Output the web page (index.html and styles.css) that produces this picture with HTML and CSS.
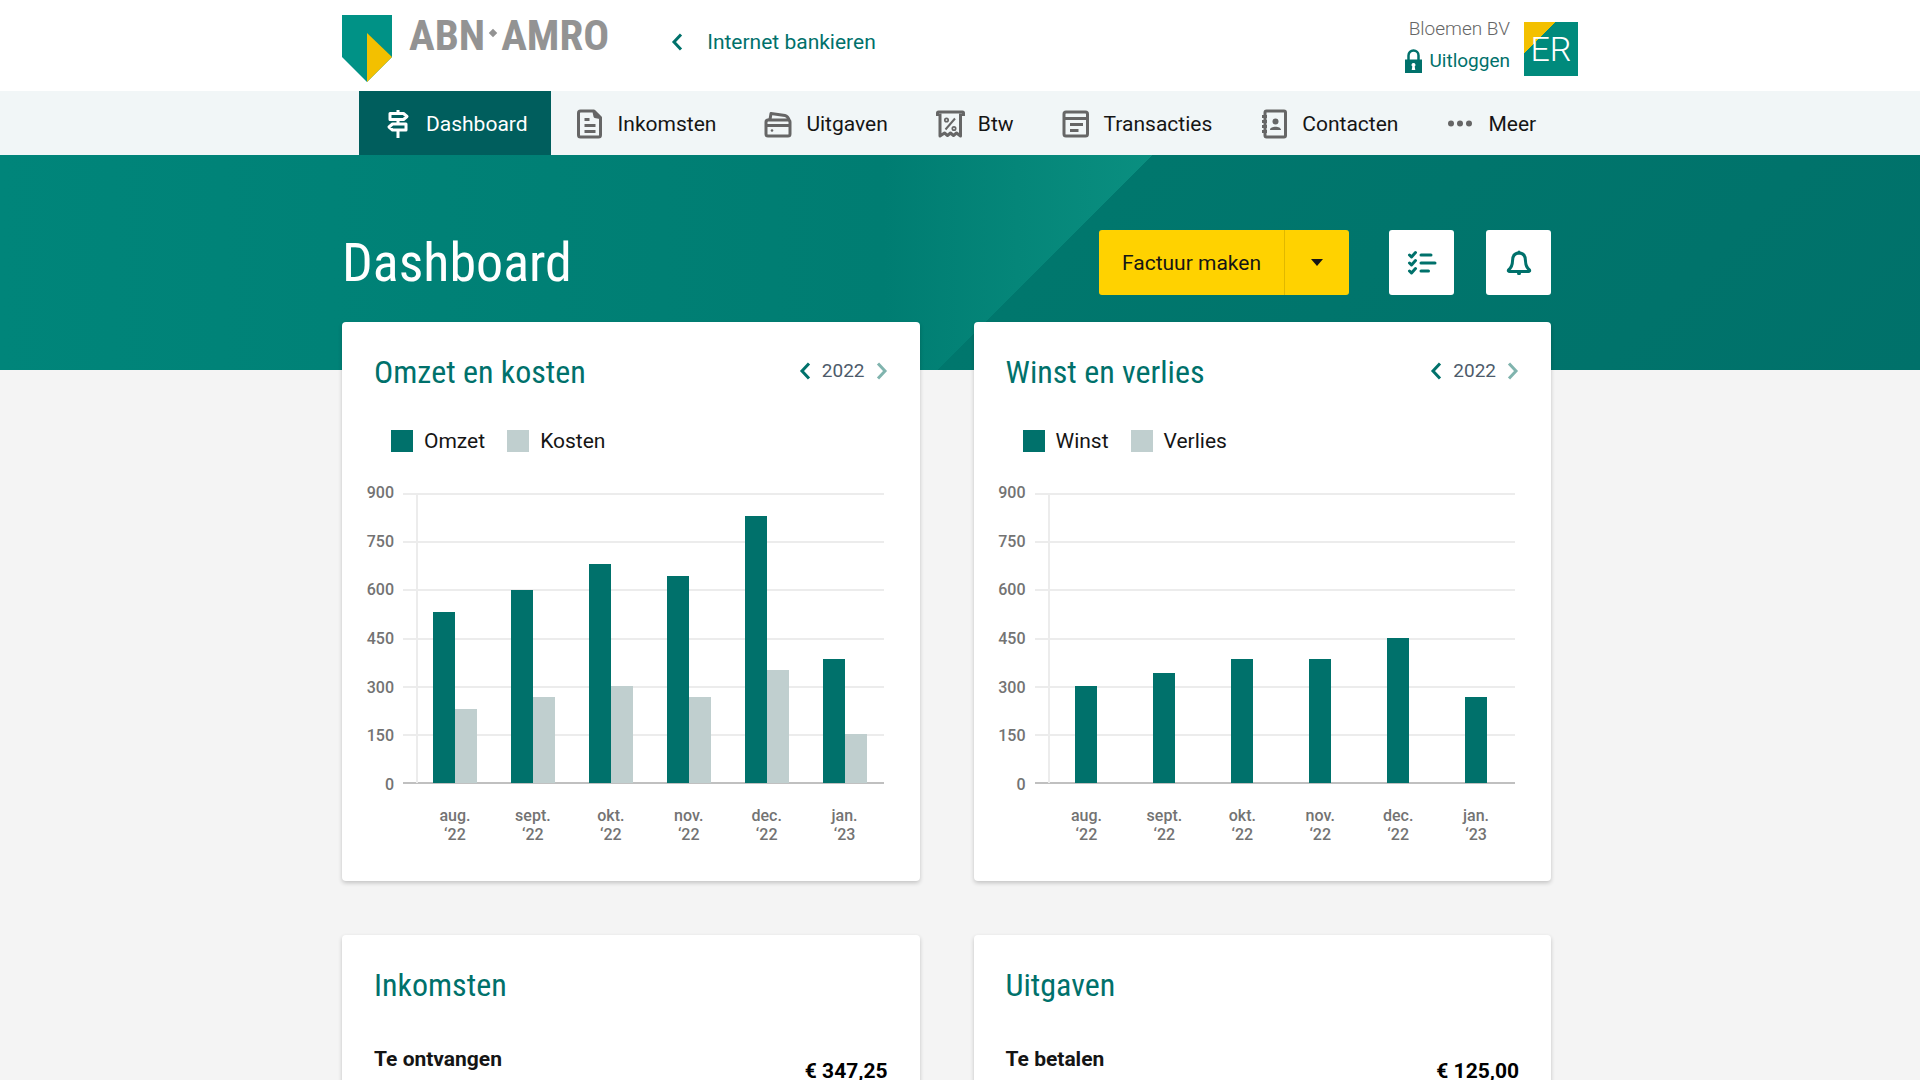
FILE: index.html
```html
<!DOCTYPE html>
<html lang="nl">
<head>
<meta charset="utf-8">
<meta name="viewport" content="width=device-width, initial-scale=1">
<title>Dashboard</title>
<link rel="stylesheet" href="styles.css">
</head>
<body>
<header class="topbar">
  <div class="topbar-inner container">
  <a class="brand" href="#" aria-label="ABN AMRO">
    <svg class="brand-shield" viewBox="0 0 50 67" aria-hidden="true"><path fill="#009286" d="M0 0h50v42L25 67 0 42z"/><path fill="#f3c000" d="M25 18l25 24-25 25z"/></svg>
    <span class="brand-name"><span>ABN</span><i class="brand-dot"></i><span>AMRO</span></span>
  </a>
  <a class="back-link" href="#">
    <svg class="chevron" viewBox="0 0 12 18" aria-hidden="true"><path d="M10 1.500L3 9l7 7.500"/></svg>
    Internet bankieren
  </a>
  <div class="account">
    <div class="account-text">
      <span class="account-name">Bloemen BV</span>
      <a class="logout" href="#">
        <svg class="lock" viewBox="0 0 17 24" aria-hidden="true"><path fill="none" stroke="#00716b" stroke-width="2.500" d="M3.500 11V6.500a5 5 0 0 1 10 0V11"/><path fill="#00716b" d="M0 10.500h17V24H0z"/><path fill="#fff" d="M8.500 14a2 2 0 0 1 1.200 3.600l.6 3.400H6.700l.6-3.400A2 2 0 0 1 8.500 14z"/></svg>
        Uitloggen
      </a>
    </div>
    <div class="avatar">ER</div>
  </div>
  </div>
</header>

<nav class="nav">
  <div class="nav-inner container">
    <a class="nav-item nav-item-active" href="#">
      <svg class="nav-icon" viewBox="0 0 32 32" aria-hidden="true"><path d="M16 2v3M16 12v4M16 22v8M8 5.500h13.500l3.500 3-3.500 3H8zM24 16H10.500L7 19l3.500 3H24z"/></svg>
      Dashboard</a>
    <a class="nav-item" href="#">
      <svg class="nav-icon" viewBox="0 0 32 32" aria-hidden="true"><path d="M6.500 3H20l6.500 6.500V27a2 2 0 0 1-2 2h-18a2 2 0 0 1-2-2V5a2 2 0 0 1 2-2zM20 4l1 4.500 5 1M10.500 11.500H15.500M10.500 17.500h11M10.500 23.500h11"/></svg>
      Inkomsten</a>
    <a class="nav-item" href="#">
      <svg class="nav-icon" viewBox="0 0 32 32" aria-hidden="true"><path d="M6 12h20a2 2 0 0 1 2 2v12a2 2 0 0 1-2 2H6a2 2 0 0 1-2-2V14a2 2 0 0 1 2-2zM4 17.500h24M4 14q0-2 4-2.500L9 5.500l14 2q3 .5 4.500 5.500"/><circle cx="10" cy="22.500" r="1.300" fill="currentColor" stroke="none"/></svg>
      Uitgaven</a>
    <a class="nav-item" href="#">
      <svg class="nav-icon" viewBox="0 0 32 32" aria-hidden="true"><path d="M6 5.500V28l4.500-3 3 2.500 3-2.500 3 2.500 3-2.500 4 3V5.500"/><path stroke-width="3" d="M3.500 8V5a1 1 0 0 1 1-1h24a1 1 0 0 1 1 1v3"/><path stroke-width="2" d="M21 10.500l-9.500 11"/><circle cx="12.500" cy="12" r="1.700" stroke-width="1.700"/><circle cx="20" cy="20.500" r="1.700" stroke-width="1.700"/></svg>
      Btw</a>
    <a class="nav-item" href="#">
      <svg class="nav-icon" viewBox="0 0 32 32" aria-hidden="true"><path d="M6 4h19.500a2 2 0 0 1 2 2v20a2 2 0 0 1-2 2H6a2 2 0 0 1-2-2V6a2 2 0 0 1 2-2zM4 10.500h23.500M10 16.500h13M10 22.500h8.500"/></svg>
      Transacties</a>
    <a class="nav-item" href="#">
      <svg class="nav-icon" viewBox="0 0 32 32" aria-hidden="true"><path d="M8.500 3H26a1.500 1.500 0 0 1 1.500 1.500v23A1.500 1.500 0 0 1 26 29H8.500A1.500 1.500 0 0 1 7 27.500v-23A1.500 1.500 0 0 1 8.500 3zM4 8.500h5M4 13.500h5M4 18.500h5M4 23.500h5"/><circle cx="17.500" cy="13.500" r="3" fill="currentColor" stroke="none"/><path fill="currentColor" stroke="none" d="M12 22c0-4.500 11-4.500 11 0z"/></svg>
      Contacten</a>
    <a class="nav-item" href="#">
      <svg class="nav-icon" viewBox="0 0 32 32" aria-hidden="true"><g fill="currentColor" stroke="none"><circle cx="7" cy="15.500" r="3"/><circle cx="16" cy="15.500" r="3"/><circle cx="25" cy="15.500" r="3"/></g></svg>
      Meer</a>
  </div>
</nav>

<section class="hero">
  <div class="hero-inner container">
    <h1 class="hero-title">Dashboard</h1>
    <div class="split-button">
      <button class="split-main" type="button">Factuur maken</button>
      <button class="split-toggle" type="button" aria-label="Meer opties"><svg class="caret" viewBox="0 0 12 7" aria-hidden="true"><path d="M0 0h12L6 7z"/></svg></button>
    </div>
    <div class="icon-buttons">
      <button class="icon-button" type="button" aria-label="Taken"><svg viewBox="0 0 32 32" aria-hidden="true"><path d="M3.500 8l2 2L9.500 5.500M3.500 16l2 2L9.500 13.500M3.500 24l2 2L9.500 21.500M15 8h10M15 16h14M15 24h7.500"/></svg></button>
      <button class="icon-button" type="button" aria-label="Meldingen"><svg viewBox="0 0 32 32" aria-hidden="true"><path d="M16 6c5 0 6.500 3.500 6.500 8 0 5 1.500 7 4 9 .5 1-.2 1.500-1 1.500h-19c-.8 0-1.500-.5-1-1.500 2.500-2 4-4 4-9 0-4.500 1.500-8 6.500-8z"/><path d="M16 5v1M15.500 26.500h1"/></svg></button>
    </div>
  </div>
</section>

<main class="cards container">
  <section class="card">
    <div class="card-head">
      <h2 class="card-title">Omzet en kosten</h2>
      <div class="year">
        <button class="year-step" type="button" aria-label="Vorig jaar"><svg class="chevron" viewBox="0 0 12 18" aria-hidden="true"><path d="M10 1.500L3 9l7 7.500"/></svg></button>
        <span>2022</span>
        <button class="year-step" type="button" aria-label="Volgend jaar" disabled><svg class="chevron" viewBox="0 0 12 18" aria-hidden="true"><path d="M2 1.500L9 9l-7 7.500"/></svg></button>
      </div>
    </div>
    <ul class="legend">
      <li><i class="swatch swatch-dark"></i>Omzet</li>
      <li><i class="swatch swatch-light"></i>Kosten</li>
    </ul>
    <div class="chart">
      <div class="scale"><span>900</span><span>750</span><span>600</span><span>450</span><span>300</span><span>150</span><span>0</span></div>
      <div class="gridlines"><i></i><i></i><i></i><i></i><i></i><i></i></div>
      <div class="bars">
        <div class="group"><i class="bar" style="height:59%"></i><i class="bar bar-light" style="height:25.500%"></i></div>
        <div class="group"><i class="bar" style="height:66.700%"></i><i class="bar bar-light" style="height:29.700%"></i></div>
        <div class="group"><i class="bar" style="height:75.600%"></i><i class="bar bar-light" style="height:33.600%"></i></div>
        <div class="group"><i class="bar" style="height:71.500%"></i><i class="bar bar-light" style="height:29.700%"></i></div>
        <div class="group"><i class="bar" style="height:92.200%"></i><i class="bar bar-light" style="height:39.100%"></i></div>
        <div class="group"><i class="bar" style="height:42.800%"></i><i class="bar bar-light" style="height:17%"></i></div>
      </div>
      <div class="months"><span>aug.<br>‘22</span><span>sept.<br>‘22</span><span>okt.<br>‘22</span><span>nov.<br>‘22</span><span>dec.<br>‘22</span><span>jan.<br>‘23</span></div>
    </div>
  </section>

  <section class="card">
    <div class="card-head">
      <h2 class="card-title">Winst en verlies</h2>
      <div class="year">
        <button class="year-step" type="button" aria-label="Vorig jaar"><svg class="chevron" viewBox="0 0 12 18" aria-hidden="true"><path d="M10 1.500L3 9l7 7.500"/></svg></button>
        <span>2022</span>
        <button class="year-step" type="button" aria-label="Volgend jaar" disabled><svg class="chevron" viewBox="0 0 12 18" aria-hidden="true"><path d="M2 1.500L9 9l-7 7.500"/></svg></button>
      </div>
    </div>
    <ul class="legend">
      <li><i class="swatch swatch-dark"></i>Winst</li>
      <li><i class="swatch swatch-light"></i>Verlies</li>
    </ul>
    <div class="chart">
      <div class="scale"><span>900</span><span>750</span><span>600</span><span>450</span><span>300</span><span>150</span><span>0</span></div>
      <div class="gridlines"><i></i><i></i><i></i><i></i><i></i><i></i></div>
      <div class="bars">
        <div class="group"><i class="bar" style="height:33.500%"></i></div>
        <div class="group"><i class="bar" style="height:38%"></i></div>
        <div class="group"><i class="bar" style="height:42.800%"></i></div>
        <div class="group"><i class="bar" style="height:42.800%"></i></div>
        <div class="group"><i class="bar" style="height:50.100%"></i></div>
        <div class="group"><i class="bar" style="height:29.700%"></i></div>
      </div>
      <div class="months"><span>aug.<br>‘22</span><span>sept.<br>‘22</span><span>okt.<br>‘22</span><span>nov.<br>‘22</span><span>dec.<br>‘22</span><span>jan.<br>‘23</span></div>
    </div>
  </section>

  <section class="card">
    <div class="card-head"><h2 class="card-title">Inkomsten</h2></div>
    <div class="total"><strong class="total-label">Te ontvangen</strong><strong class="total-amount">€ 347,25</strong></div>
  </section>

  <section class="card">
    <div class="card-head"><h2 class="card-title">Uitgaven</h2></div>
    <div class="total"><strong class="total-label">Te betalen</strong><strong class="total-amount">€ 125,00</strong></div>
  </section>
</main>
</body>
</html>
```
FILE: styles.css
```css
* { box-sizing: border-box; }

:root {
  --green: #00716b;
  --ink: #151515;
  --grey: #666;
  --condensed: "Roboto Condensed", "Liberation Sans Narrow", Roboto, sans-serif;
}

body {
  margin: 0;
  height: 100vh;
  overflow: hidden;
  background: #f4f4f4;
  color: var(--ink);
  font-family: Roboto, sans-serif;
  font-size: 21px;
  line-height: 28px;
}

a { color: inherit; text-decoration: none; }
h1, h2 { margin: 0; font-weight: 400; }
svg { display: block; flex: none; }
button { padding: 0; border: 0; background: none; color: inherit; font: inherit; }

.container {
  width: 100%;
  max-width: 1236px;
  margin: 0 auto;
}

/* Top bar */
.topbar { background: #fff; }
.topbar-inner { display: flex; align-items: flex-start; height: 91px; }
.brand { display: flex; gap: 17px; padding-top: 15px; }
.brand-shield { width: 50px; height: 67px; }
.brand-name {
  display: flex;
  gap: 3px;
  color: #939393;
  font-family: var(--condensed);
  font-size: 43px;
  font-weight: 700;
  line-height: 40px;
}
.brand-dot { width: 6px; height: 6px; margin: 15px 2px 0; background: #939393; transform: rotate(45deg); }

.back-link { display: flex; align-items: center; gap: 24px; margin-left: 62px; padding-top: 28px; color: var(--green); }
.chevron { width: 12px; height: 18px; fill: none; stroke: currentColor; stroke-width: 3; }

.account { display: flex; gap: 14px; margin-left: auto; padding-top: 22px; }
.account-text { display: flex; flex-direction: column; align-items: flex-end; margin-top: -7px; font-size: 19px; line-height: 28px; }
.account-name { color: var(--grey); font-weight: 300; }
.logout { display: flex; align-items: center; gap: 7px; padding-top: 4px; color: var(--green); }
.lock { width: 17px; height: 24px; }
.avatar {
  width: 54px;
  height: 54px;
  background: linear-gradient(135deg, #f3c000 29%, #008a7c 29%);
  color: #fff;
  font-size: 34px;
  font-weight: 300;
  line-height: 54px;
  text-align: center;
}

/* Navigation */
.nav { background: #f1f6f7; }
.nav-inner { display: flex; padding-left: 17px; }
.nav-item { display: flex; align-items: center; gap: 12px; height: 64px; padding: 2px 23px 0; white-space: nowrap; }
.nav-item-active { background: #005e5d; color: #fff; }
.nav-icon { width: 32px; height: 32px; fill: none; stroke: currentColor; stroke-width: 3; stroke-linejoin: round; color: var(--grey); }
.nav-item-active .nav-icon { color: #fff; }

/* Hero */
.hero {
  padding: 75px 0;
  background:
    linear-gradient(135deg, transparent 54%, #00776d 54%, #00716a 100%),
    linear-gradient(90deg, #00857a 0%, #007d72 46%, #0a8f80 60%);
}
.hero-inner { display: flex; align-items: center; padding-right: 27px; }
.hero-title { margin-right: auto; color: #fff; font-family: var(--condensed); font-size: 54px; line-height: 65px; }
.split-button { display: flex; width: 250px; height: 65px; margin-right: 40px; overflow: hidden; border-radius: 3px; background: #ffd200; }
.split-main { flex: 1; }
.split-toggle { display: grid; place-items: center; width: 65px; border-left: 1px solid #e0b800; }
.caret { width: 12px; height: 7px; fill: var(--ink); }
.icon-buttons { display: flex; gap: 32px; }
.icon-button { display: grid; place-items: center; width: 65px; height: 65px; border-radius: 3px; background: #fff; color: var(--green); }
.icon-button svg { width: 32px; height: 32px; fill: none; stroke: currentColor; stroke-width: 3; stroke-linecap: round; stroke-linejoin: round; }

/* Cards */
.cards { display: grid; grid-template-columns: 1fr 1fr; gap: 54px; margin-top: -48px; padding-right: 27px; }
.card { padding: 30px 0; border-radius: 4px; background: #fff; box-shadow: 0 2px 4px rgba(0, 0, 0, .2); }
.card-head { display: flex; align-items: flex-start; justify-content: space-between; padding: 0 32px; }
.card-title { color: var(--green); font-family: var(--condensed); font-size: 32px; line-height: 40px; }
.year { display: flex; align-items: center; gap: 11px; color: #4d5b6b; font-size: 19px; line-height: 38px; }
.year-step { color: var(--green); }
.year-step:disabled { color: #80b4ae; }

.legend { display: flex; gap: 22px; margin: 35px 0 0; padding: 0 49px; list-style: none; }
.legend li { display: flex; align-items: center; gap: 11px; }
.swatch { width: 22px; height: 22px; }
.swatch-dark { background: var(--green); }
.swatch-light { background: #c0cfcf; }

.chart {
  display: grid;
  grid-template-columns: 36px 1fr;
  grid-template-rows: 291px auto;
  column-gap: 9px;
  margin-top: 38px;
  padding: 0 36px 0 16px;
  color: #737373;
  font-size: 16px;
  font-weight: 500;
  line-height: 19px;
}
.scale { display: flex; flex-direction: column; justify-content: space-between; margin: -10px 0; text-align: right; }
.gridlines { grid-area: 1 / 2; display: flex; flex-direction: column; border-bottom: 2px solid #c0c0c0; }
.gridlines i { flex: 1; border-top: 2px solid #ececec; }
.bars { grid-area: 1 / 2; display: flex; margin: 0 0 1px 13px; box-shadow: inset 2px 0 #ececec; }
.group { display: flex; flex: 1; align-items: flex-end; justify-content: center; }
.bar { width: 22px; background: var(--green); }
.bar-light { background: #c0cfcf; }
.months { grid-column: 2; display: flex; margin-left: 13px; padding: 22px 0 7px; text-align: center; }
.months span { flex: 1; }

.total { display: flex; justify-content: space-between; padding: 40px 32px 0; }
.total-label { font-weight: 700; }
.total-amount { margin-top: 12px; color: #000; }
```
